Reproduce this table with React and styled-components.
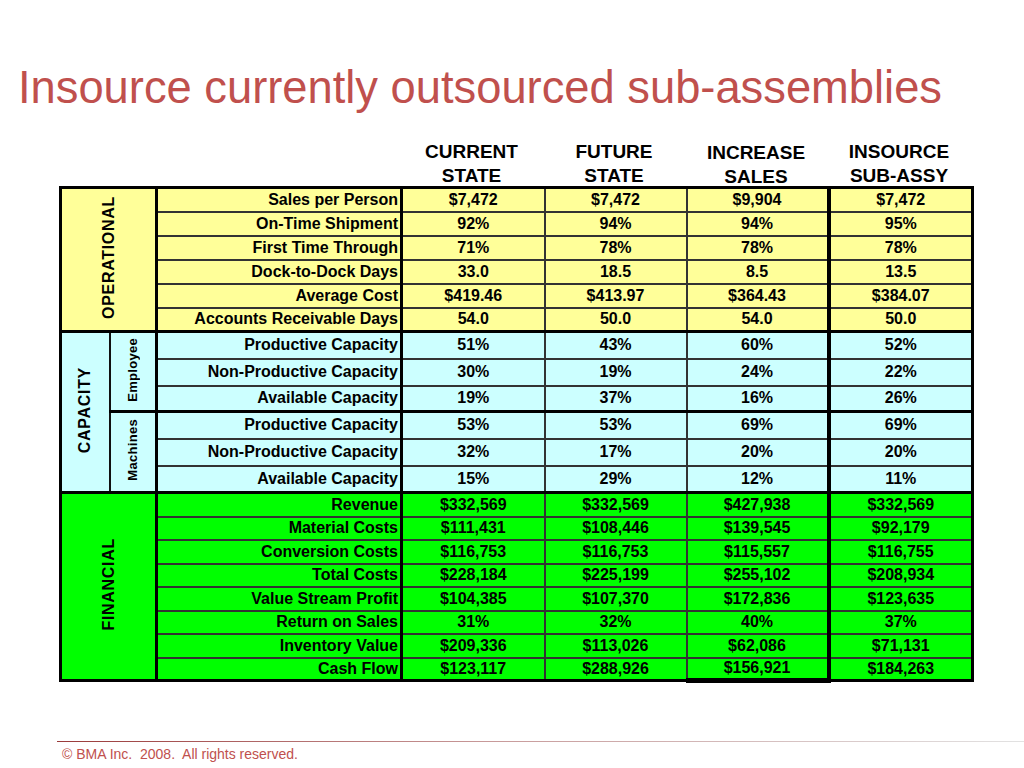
import styled, { createGlobalStyle } from "styled-components";

const GlobalStyle = createGlobalStyle`
  body {
    margin: 0;
    background: #ffffff;
  }
`;

const COLS = [49, 47, 245, 143, 142, 142, 144];
const HEADS = [
  ["CURRENT", "STATE"],
  ["FUTURE", "STATE"],
  ["INCREASE", "SALES"],
  ["INSOURCE", "SUB-ASSY"],
];

const sections = [
  {
    name: "OPERATIONAL",
    bg: "#FFFF99",
    heights: [24, 24, 24, 24, 24, 24],
    groups: [
      {
        rows: [
          ["Sales per Person", "$7,472", "$7,472", "$9,904", "$7,472"],
          ["On-Time Shipment", "92%", "94%", "94%", "95%"],
          ["First Time Through", "71%", "78%", "78%", "78%"],
          ["Dock-to-Dock Days", "33.0", "18.5", "8.5", "13.5"],
          ["Average Cost", "$419.46", "$413.97", "$364.43", "$384.07"],
          ["Accounts Receivable Days", "54.0", "50.0", "54.0", "50.0"],
        ],
      },
    ],
  },
  {
    name: "CAPACITY",
    bg: "#CCFFFF",
    heights: [27, 27, 26, 27, 27, 27],
    groups: [
      {
        name: "Employee",
        rows: [
          ["Productive Capacity", "51%", "43%", "60%", "52%"],
          ["Non-Productive Capacity", "30%", "19%", "24%", "22%"],
          ["Available Capacity", "19%", "37%", "16%", "26%"],
        ],
      },
      {
        name: "Machines",
        rows: [
          ["Productive Capacity", "53%", "53%", "69%", "69%"],
          ["Non-Productive Capacity", "32%", "17%", "20%", "20%"],
          ["Available Capacity", "15%", "29%", "12%", "11%"],
        ],
      },
    ],
  },
  {
    name: "FINANCIAL",
    bg: "#00FF00",
    heights: [24, 23, 24, 23, 24, 23, 24, 23],
    groups: [
      {
        rows: [
          ["Revenue", "$332,569", "$332,569", "$427,938", "$332,569"],
          ["Material Costs", "$111,431", "$108,446", "$139,545", "$92,179"],
          ["Conversion Costs", "$116,753", "$116,753", "$115,557", "$116,755"],
          ["Total Costs", "$228,184", "$225,199", "$255,102", "$208,934"],
          ["Value Stream Profit", "$104,385", "$107,370", "$172,836", "$123,635"],
          ["Return on Sales", "31%", "32%", "40%", "37%"],
          ["Inventory Value", "$209,336", "$113,026", "$62,086", "$71,131"],
          ["Cash Flow", "$123,117", "$288,926", "$156,921", "$184,263"],
        ],
      },
    ],
  },
];

function App() {
  return (
    <Slide>
      <GlobalStyle />
      <Title>Insource currently outsourced sub-assemblies</Title>
      <HeaderRow>
        <HeaderSpacer />
        {HEADS.map((h, i) => (
          <HeaderCell key={i} $w={COLS[i + 3]} $drop={i === 2}>
            {h[0]}
            <br />
            {h[1]}
          </HeaderCell>
        ))}
      </HeaderRow>
      <Table>
        <colgroup>
          {COLS.map((w, i) => (
            <Col key={i} $w={w} />
          ))}
        </colgroup>
        {sections.map((sec, si) => {
          const total = sec.groups.reduce((n, g) => n + g.rows.length, 0);
          let idx = 0;
          return (
            <tbody key={si}>
              {sec.groups.map((g, gi) =>
                g.rows.map((r, ri) => {
                  const rowIndex = idx++;
                  const lastOfGroup = ri === g.rows.length - 1;
                  const lastOfSection = rowIndex === total - 1;
                  const thick = lastOfGroup || lastOfSection;
                  return (
                    <Row key={rowIndex} $h={sec.heights[rowIndex]} $bg={sec.bg}>
                      {rowIndex === 0 && (
                        <SectionCell rowSpan={total} colSpan={g.name ? 1 : 2} $thin={!!g.name}>
                          <Vertical>{sec.name}</Vertical>
                        </SectionCell>
                      )}
                      {g.name && ri === 0 && (
                        <GroupCell rowSpan={g.rows.length}>
                          <Vertical $small>{g.name}</Vertical>
                        </GroupCell>
                      )}
                      <LabelCell $thick={thick}>{r[0]}</LabelCell>
                      {r.slice(1).map((v, vi) => (
                        <ValueCell
                          key={vi}
                          $thick={thick}
                          $edge={vi === 2}
                          $end={vi === 2 && lastOfSection && si === sections.length - 1}
                        >
                          {v}
                        </ValueCell>
                      ))}
                    </Row>
                  );
                })
              )}
            </tbody>
          );
        })}
      </Table>
      <Footer>
        <Rule />
        <Copy>© BMA Inc.&nbsp; 2008.&nbsp; All rights reserved.</Copy>
      </Footer>
    </Slide>
  );
}

const Slide = styled.div`
  width: 1024px;
  height: 768px;
  display: flex;
  flex-direction: column;
  overflow: hidden;
  font-family: "Liberation Sans", Arial, Helvetica, sans-serif;
  color: #000;
`;

const Title = styled.h1`
  margin: 62px 0 0 18px;
  font-size: 45.3px;
  font-weight: normal;
  line-height: 52px;
  color: #c0504d;
  white-space: nowrap;
`;

const HeaderRow = styled.div`
  display: flex;
  margin: 26px 0 -2px 59px;
`;

const HeaderSpacer = styled.div`
  flex: none;
  width: 341px;
`;

const HeaderCell = styled.div`
  flex: none;
  width: ${(p) => p.$w}px;
  padding-top: ${(p) => (p.$drop ? 1 : 0)}px;
  margin-bottom: ${(p) => (p.$drop ? -1 : 0)}px;
  text-align: center;
  font-size: 19px;
  font-weight: bold;
  line-height: 24px;
`;

const Table = styled.table`
  margin-left: 59px;
  width: 912px;
  table-layout: fixed;
  border-collapse: collapse;
  border: 3px solid #000;
  font-size: 16px;
  font-weight: bold;
`;

const Col = styled.col`
  width: ${(p) => p.$w}px;
`;

const Row = styled.tr`
  height: ${(p) => p.$h}px;
  background: ${(p) => p.$bg};
`;

const SectionCell = styled.td`
  padding: 0;
  text-align: center;
  vertical-align: middle;
  border-right: ${(p) => (p.$thin ? "2px solid #111" : "3px solid #000")};
  border-bottom: 3px solid #000;
`;

const GroupCell = styled.td`
  padding: 0;
  text-align: center;
  vertical-align: middle;
  border-right: 3px solid #000;
  border-bottom: 3px solid #000;
`;

const Vertical = styled.div`
  display: inline-block;
  writing-mode: vertical-rl;
  transform: rotate(180deg);
  font-size: ${(p) => (p.$small ? 13 : 16)}px;
  letter-spacing: ${(p) => (p.$small ? 0.3 : 0.7)}px;
  line-height: 1;
`;

const LabelCell = styled.td`
  padding: 0 2px 0 0;
  text-align: right;
  white-space: nowrap;
  line-height: 18px;
  border-right: 3px solid #000;
  border-bottom: ${(p) => (p.$thick ? "3px solid #000" : "2px solid #333")};
`;

const ValueCell = styled.td`
  padding: 0;
  text-align: center;
  line-height: 18px;
  border-right: ${(p) => (p.$edge ? "4px solid #000" : "2px solid #333")};
  border-bottom: ${(p) =>
    p.$end ? "5px solid #000" : p.$thick ? "3px solid #000" : "2px solid #333"};
`;

const Footer = styled.div`
  margin-top: auto;
  padding: 0 0 4px 57px;
`;

const Rule = styled.div`
  height: 1px;
  background: linear-gradient(to right, #9a3a3a, #c89a9a 45%, #e2e2e2);
`;

const Copy = styled.div`
  padding: 2px 0 0 5px;
  font-size: 14px;
  line-height: 20px;
  color: #c0504d;
`;

export default App;
